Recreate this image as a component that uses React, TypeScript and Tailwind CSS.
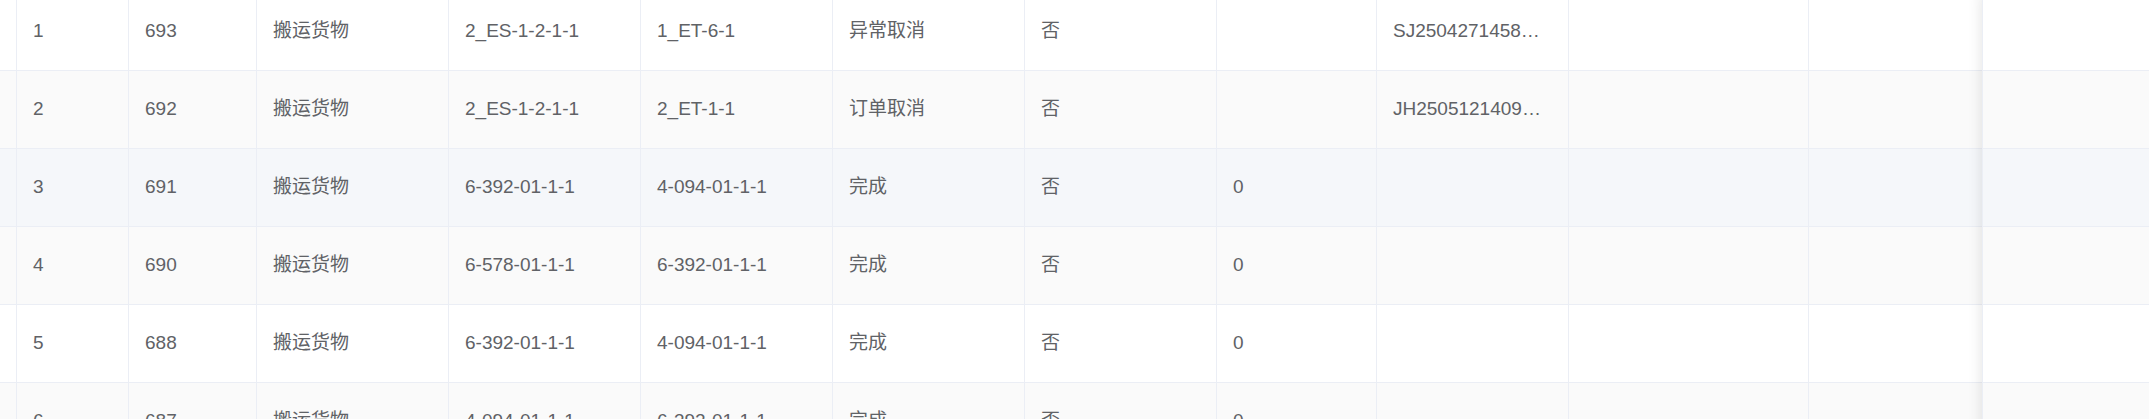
const COLS = [
  'w-[17px]',
  'w-[112px]',
  'w-[128px]',
  'w-[192px]',
  'w-[192px]',
  'w-[192px]',
  'w-[192px]',
  'w-[192px]',
  'w-[160px]',
  'w-[192px]',
  'w-[240px]',
  'flex-1',
]

const ROWS = [
  ['', '1', '693', '搬运货物', '2_ES-1-2-1-1', '1_ET-6-1', '异常取消', '否', '', 'SJ2504271458…', '', ''],
  ['', '2', '692', '搬运货物', '2_ES-1-2-1-1', '2_ET-1-1', '订单取消', '否', '', 'JH2505121409…', '', ''],
  ['', '3', '691', '搬运货物', '6-392-01-1-1', '4-094-01-1-1', '完成', '否', '0', '', '', ''],
  ['', '4', '690', '搬运货物', '6-578-01-1-1', '6-392-01-1-1', '完成', '否', '0', '', '', ''],
  ['', '5', '688', '搬运货物', '6-392-01-1-1', '4-094-01-1-1', '完成', '否', '0', '', '', ''],
  ['', '6', '687', '搬运货物', '4-094-01-1-1', '6-392-01-1-1', '完成', '否', '0', '', '', ''],
]

// row backgrounds: striped, third row is hovered
const ROW_BG = ['bg-white', 'bg-[#fafafa]', 'bg-[#f5f7fa]', 'bg-[#fafafa]', 'bg-white', 'bg-[#fafafa]']

export default function App() {
  return (
    <div
      className="h-[419px] w-[2149px] overflow-hidden bg-white text-[19px] text-[#606266]"
      style={{ fontFamily: '"Liberation Sans", "Noto Sans CJK SC", sans-serif' }}
    >
      <div className="-mt-[7px] flex">
        <div className="min-w-0 flex-1">
          {ROWS.map((row, r) => (
            <div key={r} className={`flex h-[78px] border-b border-[#ebeef5] ${ROW_BG[r]}`}>
              {row.map((cell, c) => (
                <div
                  key={c}
                  className={`${COLS[c]} flex shrink-0 items-center overflow-hidden whitespace-nowrap ${
                    c === 0 ? '' : 'pl-4'
                  } ${c < COLS.length - 1 ? 'border-r border-[#ebeef5]' : ''}`}
                >
                  {cell}
                </div>
              ))}
            </div>
          ))}
        </div>
        <div className="relative z-10 w-[167px] shrink-0 shadow-[0_0_14px_rgba(0,0,0,0.12)]">
          {ROWS.map((_, r) => (
            <div key={r} className={`h-[78px] border-b border-l border-[#ebeef5] ${ROW_BG[r]}`} />
          ))}
        </div>
      </div>
    </div>
  )
}
